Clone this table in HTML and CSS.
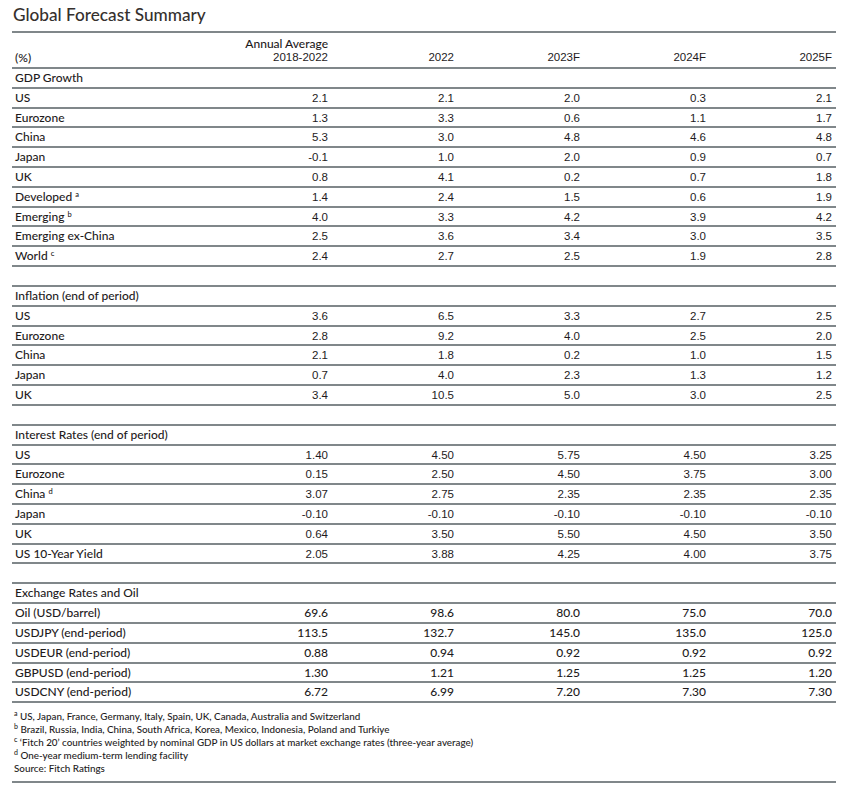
FILE: index.html
```html
<!DOCTYPE html>
<html>
<head>
<meta charset="utf-8">
<link rel="stylesheet" href="styles.css">
</head>
<body>
<div class="page">
  <h1 class="title">Global Forecast Summary</h1>
  <div class="table">
    <div class="row head">
      <div class="lbl">(%)</div>
      <div class="num"><span class="lato">Annual Average</span><br>2018-2022</div>
      <div class="num">2022</div>
      <div class="num">2023F</div>
      <div class="num">2024F</div>
      <div class="num">2025F</div>
    </div>

    <div class="row"><div class="lbl">GDP Growth</div></div>
    <div class="row"><div class="lbl">US</div><div class="num">2.1</div><div class="num">2.1</div><div class="num">2.0</div><div class="num">0.3</div><div class="num">2.1</div></div>
    <div class="row"><div class="lbl">Eurozone</div><div class="num">1.3</div><div class="num">3.3</div><div class="num">0.6</div><div class="num">1.1</div><div class="num">1.7</div></div>
    <div class="row"><div class="lbl">China</div><div class="num">5.3</div><div class="num">3.0</div><div class="num">4.8</div><div class="num">4.6</div><div class="num">4.8</div></div>
    <div class="row"><div class="lbl">Japan</div><div class="num">-0.1</div><div class="num">1.0</div><div class="num">2.0</div><div class="num">0.9</div><div class="num">0.7</div></div>
    <div class="row"><div class="lbl">UK</div><div class="num">0.8</div><div class="num">4.1</div><div class="num">0.2</div><div class="num">0.7</div><div class="num">1.8</div></div>
    <div class="row"><div class="lbl">Developed <sup>a</sup></div><div class="num">1.4</div><div class="num">2.4</div><div class="num">1.5</div><div class="num">0.6</div><div class="num">1.9</div></div>
    <div class="row"><div class="lbl">Emerging <sup>b</sup></div><div class="num">4.0</div><div class="num">3.3</div><div class="num">4.2</div><div class="num">3.9</div><div class="num">4.2</div></div>
    <div class="row"><div class="lbl">Emerging ex-China</div><div class="num">2.5</div><div class="num">3.6</div><div class="num">3.4</div><div class="num">3.0</div><div class="num">3.5</div></div>
    <div class="row"><div class="lbl">World <sup>c</sup></div><div class="num">2.4</div><div class="num">2.7</div><div class="num">2.5</div><div class="num">1.9</div><div class="num">2.8</div></div>
    <div class="row spacer"></div>

    <div class="row"><div class="lbl">Inflation (end of period)</div></div>
    <div class="row"><div class="lbl">US</div><div class="num">3.6</div><div class="num">6.5</div><div class="num">3.3</div><div class="num">2.7</div><div class="num">2.5</div></div>
    <div class="row"><div class="lbl">Eurozone</div><div class="num">2.8</div><div class="num">9.2</div><div class="num">4.0</div><div class="num">2.5</div><div class="num">2.0</div></div>
    <div class="row"><div class="lbl">China</div><div class="num">2.1</div><div class="num">1.8</div><div class="num">0.2</div><div class="num">1.0</div><div class="num">1.5</div></div>
    <div class="row"><div class="lbl">Japan</div><div class="num">0.7</div><div class="num">4.0</div><div class="num">2.3</div><div class="num">1.3</div><div class="num">1.2</div></div>
    <div class="row"><div class="lbl">UK</div><div class="num">3.4</div><div class="num">10.5</div><div class="num">5.0</div><div class="num">3.0</div><div class="num">2.5</div></div>
    <div class="row spacer"></div>

    <div class="row"><div class="lbl">Interest Rates (end of period)</div></div>
    <div class="row"><div class="lbl">US</div><div class="num">1.40</div><div class="num">4.50</div><div class="num">5.75</div><div class="num">4.50</div><div class="num">3.25</div></div>
    <div class="row"><div class="lbl">Eurozone</div><div class="num">0.15</div><div class="num">2.50</div><div class="num">4.50</div><div class="num">3.75</div><div class="num">3.00</div></div>
    <div class="row"><div class="lbl">China <sup>d</sup></div><div class="num">3.07</div><div class="num">2.75</div><div class="num">2.35</div><div class="num">2.35</div><div class="num">2.35</div></div>
    <div class="row"><div class="lbl">Japan</div><div class="num">-0.10</div><div class="num">-0.10</div><div class="num">-0.10</div><div class="num">-0.10</div><div class="num">-0.10</div></div>
    <div class="row"><div class="lbl">UK</div><div class="num">0.64</div><div class="num">3.50</div><div class="num">5.50</div><div class="num">4.50</div><div class="num">3.50</div></div>
    <div class="row"><div class="lbl">US 10-Year Yield</div><div class="num">2.05</div><div class="num">3.88</div><div class="num">4.25</div><div class="num">4.00</div><div class="num">3.75</div></div>
    <div class="row spacer"></div>

    <div class="row"><div class="lbl">Exchange Rates and Oil</div></div>
    <div class="row fx"><div class="lbl">Oil (USD/barrel)</div><div class="num">69.6</div><div class="num">98.6</div><div class="num">80.0</div><div class="num">75.0</div><div class="num">70.0</div></div>
    <div class="row fx"><div class="lbl">USDJPY (end-period)</div><div class="num">113.5</div><div class="num">132.7</div><div class="num">145.0</div><div class="num">135.0</div><div class="num">125.0</div></div>
    <div class="row fx"><div class="lbl">USDEUR (end-period)</div><div class="num">0.88</div><div class="num">0.94</div><div class="num">0.92</div><div class="num">0.92</div><div class="num">0.92</div></div>
    <div class="row fx"><div class="lbl">GBPUSD (end-period)</div><div class="num">1.30</div><div class="num">1.21</div><div class="num">1.25</div><div class="num">1.25</div><div class="num">1.20</div></div>
    <div class="row fx"><div class="lbl">USDCNY (end-period)</div><div class="num">6.72</div><div class="num">6.99</div><div class="num">7.20</div><div class="num">7.30</div><div class="num">7.30</div></div>

    <div class="notes">
      <div><sup>a</sup> US, Japan, France, Germany, Italy, Spain, UK, Canada, Australia and Switzerland</div>
      <div><sup>b</sup> Brazil, Russia, India, China, South Africa, Korea, Mexico, Indonesia, Poland and Turkiye</div>
      <div><sup>c</sup> ‘Fitch 20’ countries weighted by nominal GDP in US dollars at market exchange rates (three-year average)</div>
      <div><sup>d</sup> One-year medium-term lending facility</div>
      <div>Source: Fitch Ratings</div>
    </div>
  </div>
</div>
</body>
</html>
```

FILE: styles.css
```css
html, body {
  margin: 0;
  padding: 0;
  background: #ffffff;
}

.page {
  padding-left: 12px;
  width: 824px;
  font-family: Lato, "Open Sans", sans-serif;
  color: #1e1b1c;
}

.title {
  margin: 0;
  height: 31px;
  padding-top: 4px;
  box-sizing: border-box;
  font-size: 17.2px;
  font-weight: 500;
  line-height: 22px;
  color: #35302e;
  padding-left: 1px;
}

.table {
  border-top: 2px solid #80878a;
}

.row {
  display: grid;
  grid-template-columns: 194px repeat(5, 126px);
  height: 19.8px;
  box-sizing: border-box;
  border-bottom: 2px solid #80878a;
  font-size: 12px;
  font-weight: 500;
  line-height: 18px;
}

.row.head {
  height: 36px;
  line-height: 13px;
  align-items: end;
  padding-bottom: 3px;
}

.row.spacer {
  height: 20px;
}

.lbl {
  padding-left: 3px;
  white-space: nowrap;
}

.num {
  text-align: right;
  padding-right: 4px;
  font-family: "Liberation Sans", Arial, sans-serif;
  font-weight: normal;
  font-size: 11.5px;
}

.lato {
  font-family: Lato, sans-serif;
  font-weight: 500;
  font-size: 12px;
}

.row.fx .num {
  font-family: Lato, sans-serif;
  font-weight: 500;
  font-size: 12px;
}

sup {
  font-size: 7.5px;
  line-height: 0;
  vertical-align: 4px;
}

.notes {
  padding: 7px 0 6px 2px;
  font-size: 9.85px;
  line-height: 13px;
  border-bottom: 2px solid #80878a;
  font-weight: 500;
}

.notes sup {
  font-size: 7px;
}
```
